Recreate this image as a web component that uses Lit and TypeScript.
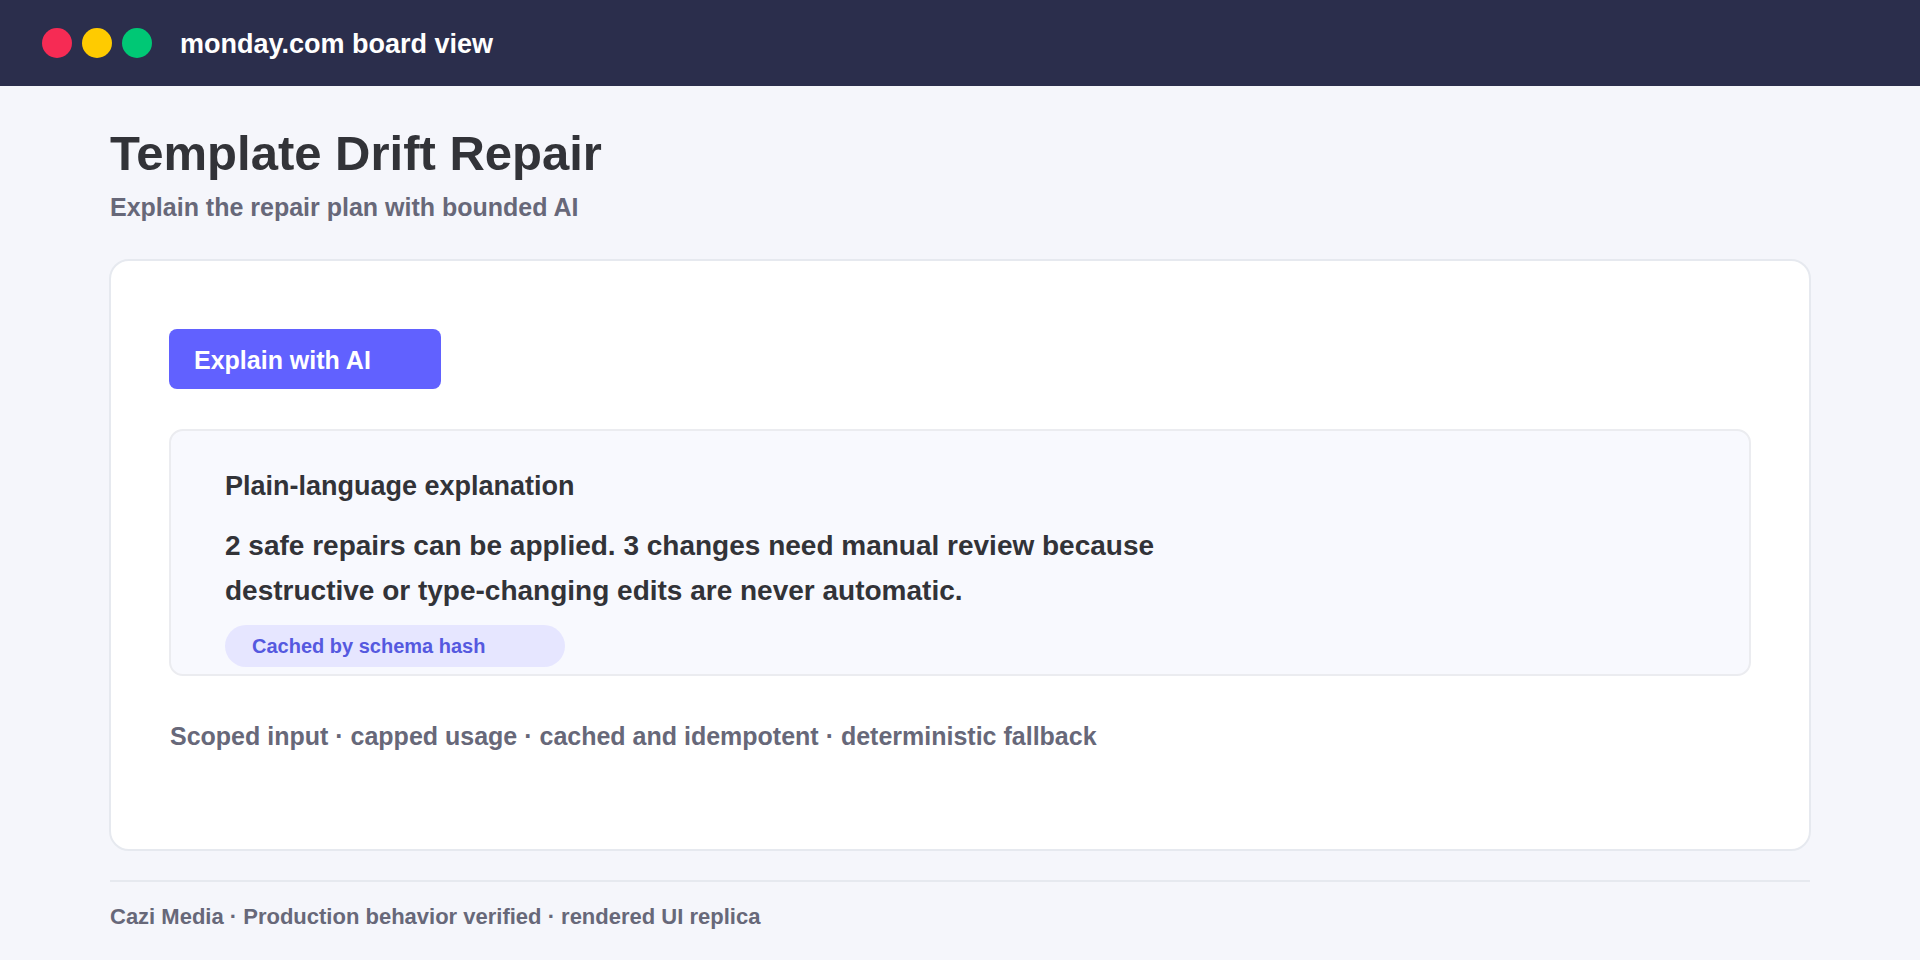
import { LitElement, html, css } from "lit";
import { customElement } from "lit/decorators.js";

@customElement("app-root")
export class AppRoot extends LitElement {
  static styles = css`
    :host {
      display: flex;
      flex-direction: column;
      min-height: 100vh;
      box-sizing: border-box;
      background: #f5f6fb;
      color: #323338;
      font-family: "Liberation Sans", Arial, Helvetica, sans-serif;
      font-weight: 700;
    }
    h1, h2, p { margin: 0; font-weight: 700; }
    .topbar {
      display: flex;
      align-items: center;
      box-sizing: border-box;
      height: 86px;
      padding: 0 42px;
      background: #2b2e4c;
      color: #ffffff;
      font-size: 27px;
      line-height: 32px;
    }
    .brand { padding-top: 2px; }
    .dots { display: flex; gap: 10px; margin-right: 28px; }
    .dot { width: 30px; height: 30px; border-radius: 50%; }
    .red { background: #f62b54; }
    .yellow { background: #ffcb00; }
    .green { background: #00c875; }
    .page { padding: 38px 110px 0; }
    .title { font-size: 49px; line-height: 58px; }
    .subtitle { margin-top: 10px; font-size: 25px; line-height: 30px; color: #676879; }
    .card {
      margin: 37px -1px 0;
      padding: 68px 58px 98px;
      border: 2px solid #e6e9ef;
      border-radius: 20px;
      background: #ffffff;
    }
    .explain {
      display: block;
      width: 272px;
      height: 60px;
      padding: 2px 25px 0;
      border: 0;
      border-radius: 8px;
      background: #6161ff;
      color: #ffffff;
      font: inherit;
      font-size: 25px;
      line-height: 30px;
      text-align: left;
    }
    .panel {
      margin-top: 40px;
      padding: 39px 54px 7px;
      border: 2px solid #ebecf0;
      border-radius: 14px;
      background: #f8f9fe;
    }
    .heading { font-size: 27px; line-height: 32px; }
    .body { max-width: 1000px; margin-top: 21px; font-size: 28px; line-height: 45px; }
    .pill {
      box-sizing: border-box;
      width: 340px;
      margin-top: 12px;
      padding: 6px 27px;
      border-radius: 21px;
      background: #e6e6ff;
      color: #5559df;
      font-size: 20px;
      line-height: 30px;
    }
    .note { margin-top: 45px; padding: 0 1px; font-size: 25px; line-height: 30px; color: #676879; }
    .footer {
      margin: 29px 110px 0;
      padding-top: 20px;
      border-top: 2px solid #e6e9ef;
      color: #676879;
      font-size: 22px;
      line-height: 30px;
    }
  `;

  render() {
    return html`
      <header class="topbar">
        <div class="dots" aria-hidden="true">
          <span class="dot red"></span>
          <span class="dot yellow"></span>
          <span class="dot green"></span>
        </div>
        <span class="brand">monday.com board view</span>
      </header>
      <main class="page">
        <h1 class="title">Template Drift Repair</h1>
        <p class="subtitle">Explain the repair plan with bounded AI</p>
        <section class="card">
          <button class="explain" type="button">Explain with AI</button>
          <article class="panel">
            <h2 class="heading">Plain-language explanation</h2>
            <p class="body">
              2 safe repairs can be applied. 3 changes need manual review because
              destructive or type-changing edits are never automatic.
            </p>
            <div class="pill">Cached by schema hash</div>
          </article>
          <p class="note">Scoped input · capped usage · cached and idempotent · deterministic fallback</p>
        </section>
      </main>
      <footer class="footer">Cazi Media · Production behavior verified · rendered UI replica</footer>
    `;
  }
}
